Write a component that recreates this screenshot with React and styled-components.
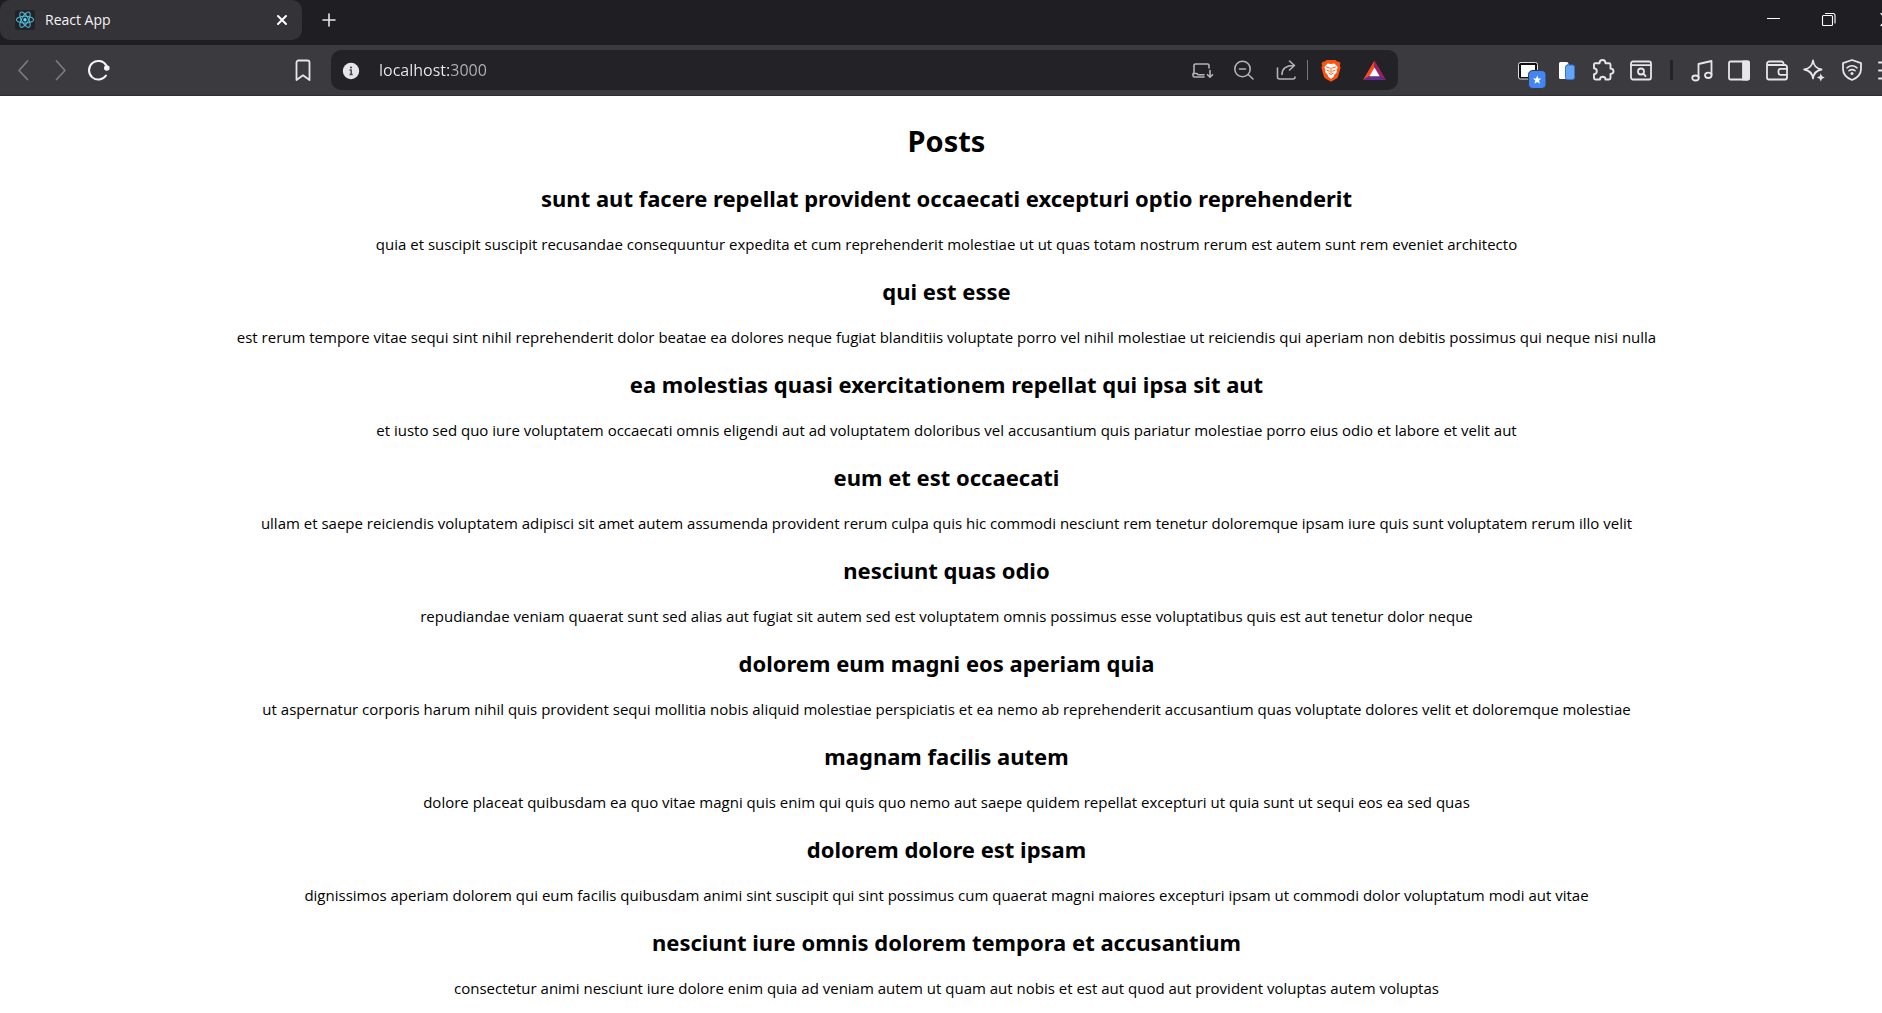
import React from "react";
import styled, { createGlobalStyle } from "styled-components";

const GlobalStyle = createGlobalStyle`
  *, *::before, *::after { box-sizing: border-box; }
  body {
    margin: 0;
    background: #ffffff;
    color: #000000;
    font-family: "Segoe UI", "Open Sans", "Noto Sans", sans-serif;
  }
  h1, h2 {
    font-family: "Segoe UI", "Noto Sans", "Open Sans", sans-serif;
  }
`;

const Chrome = styled.header`
  overflow: hidden;
  background: #1f1e23;
`;

const TabStrip = styled.div`
  display: flex;
  height: 45px;
`;

const Tab = styled.div`
  display: flex;
  align-items: center;
  width: 302px;
  height: 40px;
  padding: 0 10px 0 15px;
  border-radius: 10px;
  background: #343338;
`;

const TabTitle = styled.span`
  flex: 1;
  margin-left: 10px;
  color: #f4f4f6;
  font-size: 14px;
  line-height: 20px;
`;

const IconButton = styled.button`
  display: flex;
  align-items: center;
  justify-content: center;
  width: ${(p) => (p.$width ? `${p.$width}px` : "auto")};
  height: 40px;
  padding: 0;
  border: 0;
  background: none;
  color: ${(p) => p.$color || "#e6e5ea"};
`;

const WindowControls = styled.div`
  display: grid;
  grid-template-columns: repeat(3, 56px);
  margin: 0 -31px 0 auto;
`;

const Toolbar = styled.div`
  display: flex;
  height: 51px;
  padding-top: 5px;
  border-bottom: 1px solid #2e2d32;
  background: #3b3a3f;
`;

const Navigation = styled.nav`
  display: flex;
  justify-content: space-between;
  width: 331px;
  padding: 0 9px 0 4px;
`;

const ButtonRow = styled.div`
  display: grid;
  grid-template-columns: repeat(${(p) => p.$count}, 1fr);
  width: ${(p) => p.$width}px;
`;

const AddressBar = styled.form`
  display: flex;
  flex: 1;
  align-items: center;
  height: 40px;
  padding: 0 2px 0 12px;
  border-radius: 10px;
  background: #232227;
`;

const AddressInput = styled.input`
  flex: 1;
  min-width: 0;
  margin-left: 19px;
  padding: 0;
  border: 0;
  outline: 0;
  color: #ececf0;
  background: linear-gradient(90deg, #ececf0 70px, #b4b3ba 70px);
  background-clip: text;
  -webkit-background-clip: text;
  -webkit-text-fill-color: transparent;
  font-family: inherit;
  font-size: 16px;
  line-height: 24px;
`;

const AddressDivider = styled.span`
  width: 1px;
  height: 20px;
  margin-right: 1px;
  background: #77767c;
`;

const Extensions = styled.div`
  display: flex;
  align-items: center;
  height: 40px;
  margin: 0 -26px 0 111px;
`;

const ToolbarDivider = styled.span`
  width: 3px;
  height: 20px;
  margin: 0 10px;
  border-radius: 1px;
  background: #232227;
`;

const Posts = styled.main`
  padding-left: 11px;
  text-align: center;
`;

const PageTitle = styled.h1`
  margin: 0;
  padding: 23px 0 20px;
  font-size: 29px;
  font-weight: 700;
  line-height: 43px;
`;

const PostList = styled.div`
  display: grid;
  gap: 20px;
`;

const Post = styled.article`
  display: grid;
  gap: 20px;
`;

const PostTitle = styled.h2`
  margin: 0;
  font-size: 22px;
  font-weight: 700;
  line-height: 32px;
`;

const PostBody = styled.p`
  margin: 0;
  font-size: 15px;
  line-height: 21px;
`;

const Drawing = styled.svg`
  flex: none;
  overflow: visible;
`;

const Svg = ({ w, h, sw = 2, children }) => (
  <Drawing
    width={w}
    height={h}
    viewBox={`0 0 ${w} ${h}`}
    fill="none"
    stroke="currentColor"
    strokeWidth={sw}
    strokeLinecap="round"
    strokeLinejoin="round"
    aria-hidden="true"
  >
    {children}
  </Drawing>
);

const ReactFavicon = () => (
  <Svg w={20} h={20} sw={1}>
    <rect width="20" height="20" rx="2" fill="#222326" stroke="none" />
    <g stroke="#4fb6d3" strokeWidth="1.1">
      <ellipse cx="10" cy="9.7" rx="8.6" ry="3.4" />
      <ellipse cx="10" cy="9.7" rx="8.6" ry="3.4" transform="rotate(60 10 9.7)" />
      <ellipse cx="10" cy="9.7" rx="8.6" ry="3.4" transform="rotate(120 10 9.7)" />
    </g>
    <circle cx="10" cy="9.7" r="1.7" fill="#61dafb" stroke="none" />
  </Svg>
);
const CloseTab = () => (
  <Svg w={12} h={12}><path d="M2 2l8 8M10 2l-8 8" /></Svg>
);
const Plus = () => (
  <Svg w={14} h={14} sw={1.6}><path d="M7 1v12M1 7h12" /></Svg>
);
const Minimize = () => (
  <Svg w={13} h={14} sw={1}><path d="M0 5.5h13" strokeLinecap="butt" /></Svg>
);
const Restore = () => (
  <Svg w={14} h={14} sw={1.1}>
    <rect x="0.5" y="2.5" width="10" height="10" rx="1" />
    <path d="M3.5 .5h7.500a2 2 0 0 1 2 2v7.500" />
  </Svg>
);
const CloseWindow = () => (
  <Svg w={13} h={14} sw={1.2}><path d="M2 .5l11 12M13 .5l-11 12" /></Svg>
);
const Back = () => (
  <Svg w={12} h={20} sw={1.7}><path d="M10.500 1L2 10.500l8.500 9" /></Svg>
);
const Forward = () => (
  <Svg w={12} h={20} sw={1.7}><path d="M1.500 1L10 10.500l-8.500 9" /></Svg>
);
const Reload = () => (
  <Svg w={22} h={22}>
    <path d="M18.300 6.500A9.300 9.300 0 1 0 18 16.500" />
    <circle cx="18.800" cy="9" r="2.800" fill="currentColor" stroke="none" />
  </Svg>
);
const Bookmark = () => (
  <Svg w={16} h={22} sw={1.8}>
    <path d="M3.500 1.500h9a2 2 0 0 1 2 2v17.500L8 16.300 1.500 21v-17.500a2 2 0 0 1 2-2z" />
  </Svg>
);
const Info = () => (
  <Svg w={17} h={17}>
    <circle cx="8" cy="9" r="8.200" fill="currentColor" stroke="none" />
    <path d="M6.500 8h1.700v4.500M6.500 12.500h3.200" stroke="#4a494f" strokeWidth="1.500" strokeLinecap="butt" />
    <circle cx="8" cy="5.500" r="1.100" fill="#4a494f" stroke="none" />
  </Svg>
);
const Install = () => (
  <Svg w={22} h={18} sw={1.6}>
    <path d="M3 12.500V4.500A1.500 1.500 0 0 1 4.500 3H16.500A1.500 1.500 0 0 1 18 4.500V7" />
    <path d="M13 16H3.500A1.500 1.500 0 0 1 2 14.500V12.500h4l1 1.200h6" />
    <path d="M19 9.500v6.500M16.500 13.700l2.500 2.500 2.500-2.500" />
  </Svg>
);
const ZoomOut = () => (
  <Svg w={20} h={20} sw={1.6}>
    <circle cx="8.500" cy="9" r="7.700" />
    <path d="M14.200 14.500l4.800 4.500M5.500 9h6" />
  </Svg>
);
const Share = () => (
  <Svg w={20} h={20} sw={1.6}>
    <path d="M1.500 8v9a2 2 0 0 0 2 2h13.500a2 2 0 0 0 2-2" />
    <path d="M6 14.500c0-5 3-9 12-9M13.500 1l5 4.500-5 4.500" />
  </Svg>
);
const BraveLion = () => (
  <Svg w={20} h={23}>
    <path
      d="M5.500 1h9l2 1.700 1.500-.2 1.500 2-.7 1.700.8 2.300-2.400 8.800c-.3 1-.8 1.700-1.600 2.300L10 22.700 4.400 19.600c-.8-.6-1.300-1.300-1.600-2.300L.4 8.500l.8-2.300L.5 4.500l1.500-2 1.500.2z"
      fill="#fb5412"
      stroke="none"
    />
    <path
      d="M6.500 4.500l3.500.6 3.500-.6 3.300 3.700-1.300 2.700.5 2-2.500 2.600-1 2.400L10 19.700l-2.500-1.800-1-2.400L4 12.900l.5-2-1.300-2.700z"
      fill="#fff"
      stroke="none"
    />
    <path
      d="M5.500 8l2.900 1M14.500 8l-2.900 1M6 11.200l2.300 1M14 11.200l-2.300 1M10 9v4.500M8 14.300l2 1.200 2-1.200"
      stroke="#fb5412"
      strokeWidth="1"
    />
  </Svg>
);
const BatTriangle = () => (
  <Svg w={23} h={20}>
    <g stroke="none">
      <path d="M11.500 .5L0 20l6.500-4 5-8z" fill="#ff4724" />
      <path d="M11.500 .5L23 20l-6.500-4-5-8z" fill="#9e1f63" />
      <path d="M0 20h23l-6.500-4h-10z" fill="#662d91" />
      <path d="M11.500 7.500L6.300 16.200h10.400z" fill="#fff" />
    </g>
  </Svg>
);
const PictureInPicture = () => (
  <Svg w={22} h={20} sw={1}>
    <rect x="1.500" y="2.500" width="19" height="16.500" rx="2" fill="#111113" stroke="#dddce1" />
    <rect x="4" y="5" width="14" height="12" fill="#fff" stroke="none" />
    <rect x="11.500" y="10.500" width="17.500" height="18" rx="4" fill="#4285f4" stroke="#3b3a3f" />
    <path d="M20.200 15.500l1.200 3h3.100l-2.400 2 .8 3.200-2.700-1.800-2.700 1.800.8-3.200-2.400-2h3.100z" fill="#fff" stroke="none" />
  </Svg>
);
const CopyPages = () => (
  <Svg w={16} h={20}>
    <path d="M2.500 2h6a2 2 0 0 1 2 2v15h-8A1.500 1.500 0 0 1 1 17.500v-14A1.500 1.500 0 0 1 2.500 2z" fill="#fff" stroke="none" />
    <rect x="7.500" y="5" width="9" height="14.500" rx="2" fill="#65a5f7" stroke="#3576cf" strokeWidth="1" />
  </Svg>
);
const Puzzle = () => (
  <Svg w={22} h={22} sw={1.9}>
    <path d="M3 4.300h4.500C7.600 2 8.700 1 10.500 1s2.900 1 3 3.300H17a1.500 1.500 0 0 1 1.500 1.500v3.700c1.800.2 3 1.200 3 2.700s-1.200 2.500-3 2.700V19a1.500 1.500 0 0 1-1.500 1.500h-3.500c0-1.800-1.200-2.800-2.700-2.800S8 18.700 8 20.500H3.500A1.500 1.500 0 0 1 2 19v-3.800c1.900-.1 2.800-1.300 2.800-2.900S3.900 9.500 2 9.300v-4a1 1 0 0 1 1-1z" />
  </Svg>
);
const SearchTabs = () => (
  <Svg w={22} h={20} sw={1.800}>
    <rect x="1" y="1.500" width="20" height="18" rx="2" />
    <path d="M1 5.100h20" />
    <circle cx="11" cy="11.500" r="3" />
    <path d="M13.300 13.800l2.200 2.200" />
  </Svg>
);
const Music = () => (
  <Svg w={22} h={22} sw={1.800}>
    <path d="M7.500 18.500V5L20.500 2V15.500" />
    <ellipse cx="4.500" cy="19" rx="3.300" ry="2.500" />
    <ellipse cx="17.300" cy="16.300" rx="3.300" ry="2.700" />
  </Svg>
);
const SidePanel = () => (
  <Svg w={22} h={20} sw={1.800}>
    <rect x="1" y="1.500" width="20" height="18" rx="1.500" />
    <path d="M15 1.500h5a1 1 0 0 1 1 1v16a1 1 0 0 1-1 1h-5z" fill="currentColor" />
  </Svg>
);
const Wallet = () => (
  <Svg w={22} h={20} sw={1.800}>
    <path d="M17.500 5V3.500a2 2 0 0 0-2-2H3.500A2.500 2.500 0 0 0 1 4v13.500a2 2 0 0 0 2 2h16a2 2 0 0 0 2-2V7a2 2 0 0 0-2-2H2" />
    <path d="M21 8.800h-6.500a2 2 0 0 0-2 2v2a2 2 0 0 0 2 2H21" />
  </Svg>
);
const Sparkle = () => (
  <Svg w={22} h={22} sw={1.800}>
    <path d="M10 1.500c.7 5.500 3 8 8.500 9-5.500 1-7.800 3.500-8.500 9-.7-5.500-3-8-8.800-9 5.800-1 8.100-3.500 8.800-9z" />
    <path d="M17.800 15v6.500M14.500 18.500h6.500" stroke="#3b3a3f" strokeWidth="3" />
    <path d="M17.800 14.500l1.200 2.800 2.800 1.200-2.800 1.200-1.200 2.800-1.200-2.800-2.800-1.200 2.800-1.200z" fill="currentColor" stroke="none" />
  </Svg>
);
const ShieldWifi = () => (
  <Svg w={20} h={22} sw={1.800}>
    <path d="M10 1l9 3.200v5.800c0 5-3.500 8.800-9 11-5.500-2.200-9-6-9-11V4.200z" />
    <path d="M5 8.800c3-2.400 7-2.400 10 0M7 11.700c2-1.400 4-1.400 6 0" strokeWidth="1.600" />
    <circle cx="10" cy="14.500" r="1.500" fill="currentColor" stroke="none" />
  </Svg>
);
const Menu = () => (
  <Svg w={22} h={20}><path d="M1 2.500h20M1 10.500h20M1 18.500h20" /></Svg>
);

const posts = [
  ["sunt aut facere repellat provident occaecati excepturi optio reprehenderit", "quia et suscipit suscipit recusandae consequuntur expedita et cum reprehenderit molestiae ut ut quas totam nostrum rerum est autem sunt rem eveniet architecto"],
  ["qui est esse", "est rerum tempore vitae sequi sint nihil reprehenderit dolor beatae ea dolores neque fugiat blanditiis voluptate porro vel nihil molestiae ut reiciendis qui aperiam non debitis possimus qui neque nisi nulla"],
  ["ea molestias quasi exercitationem repellat qui ipsa sit aut", "et iusto sed quo iure voluptatem occaecati omnis eligendi aut ad voluptatem doloribus vel accusantium quis pariatur molestiae porro eius odio et labore et velit aut"],
  ["eum et est occaecati", "ullam et saepe reiciendis voluptatem adipisci sit amet autem assumenda provident rerum culpa quis hic commodi nesciunt rem tenetur doloremque ipsam iure quis sunt voluptatem rerum illo velit"],
  ["nesciunt quas odio", "repudiandae veniam quaerat sunt sed alias aut fugiat sit autem sed est voluptatem omnis possimus esse voluptatibus quis est aut tenetur dolor neque"],
  ["dolorem eum magni eos aperiam quia", "ut aspernatur corporis harum nihil quis provident sequi mollitia nobis aliquid molestiae perspiciatis et ea nemo ab reprehenderit accusantium quas voluptate dolores velit et doloremque molestiae"],
  ["magnam facilis autem", "dolore placeat quibusdam ea quo vitae magni quis enim qui quis quo nemo aut saepe quidem repellat excepturi ut quia sunt ut sequi eos ea sed quas"],
  ["dolorem dolore est ipsam", "dignissimos aperiam dolorem qui eum facilis quibusdam animi sint suscipit qui sint possimus cum quaerat magni maiores excepturi ipsam ut commodi dolor voluptatum modi aut vitae"],
  ["nesciunt iure omnis dolorem tempora et accusantium", "consectetur animi nesciunt iure dolore enim quia ad veniam autem ut quam aut nobis et est aut quod aut provident voluptas autem voluptas"],
];

const pageActions = [
  ["Install app", Install],
  ["Zoom", ZoomOut],
  ["Share", Share],
];
const shieldActions = [
  ["Brave Shields", BraveLion],
  ["Brave Rewards", BatTriangle],
];
const extensions = [
  ["Picture in picture", PictureInPicture],
  ["Copy pages", CopyPages],
  ["Extensions", Puzzle],
  ["Search tabs", SearchTabs],
];
const browserTools = [
  ["Playlist", Music],
  ["Side panel", SidePanel],
  ["Wallet", Wallet],
  ["Leo AI", Sparkle],
  ["VPN", ShieldWifi],
  ["Menu", Menu],
];

const Buttons = ({ items, width, color }) => (
  <ButtonRow $count={items.length} $width={width}>
    {items.map(([label, Icon]) => (
      <IconButton key={label} type="button" aria-label={label} $color={color}>
        <Icon />
      </IconButton>
    ))}
  </ButtonRow>
);

export default function App() {
  return (
    <>
      <GlobalStyle />
      <Chrome>
        <TabStrip>
          <Tab>
            <ReactFavicon />
            <TabTitle>React App</TabTitle>
            <IconButton type="button" aria-label="Close tab" $width={20} $color="#ffffff"><CloseTab /></IconButton>
          </Tab>
          <IconButton type="button" aria-label="New tab" $width={54}><Plus /></IconButton>
          <WindowControls>
            <IconButton type="button" aria-label="Minimize" $color="#ffffff"><Minimize /></IconButton>
            <IconButton type="button" aria-label="Restore" $color="#ffffff"><Restore /></IconButton>
            <IconButton type="button" aria-label="Close window" $color="#ffffff"><CloseWindow /></IconButton>
          </WindowControls>
        </TabStrip>
        <Toolbar>
          <Navigation>
            <ButtonRow $count={3} $width={114}>
              <IconButton type="button" aria-label="Back" $color="#7c7b81"><Back /></IconButton>
              <IconButton type="button" aria-label="Forward" $color="#7c7b81"><Forward /></IconButton>
              <IconButton type="button" aria-label="Reload" $color="#f4f4f6"><Reload /></IconButton>
            </ButtonRow>
            <IconButton type="button" aria-label="Bookmark this page" $width={38}><Bookmark /></IconButton>
          </Navigation>
          <AddressBar onSubmit={(e) => e.preventDefault()}>
            <IconButton type="button" aria-label="Site information" $width={17}><Info /></IconButton>
            <AddressInput type="text" aria-label="Address" defaultValue="localhost:3000" spellCheck={false} />
            <Buttons items={pageActions} width={126} color="#b4b3ba" />
            <AddressDivider />
            <Buttons items={shieldActions} width={87} />
          </AddressBar>
          <Extensions>
            <Buttons items={extensions} width={151} />
            <ToolbarDivider />
            <Buttons items={browserTools} width={225} />
          </Extensions>
        </Toolbar>
      </Chrome>
      <Posts>
        <PageTitle>Posts</PageTitle>
        <PostList>
          {posts.map(([title, body]) => (
            <Post key={title}>
              <PostTitle>{title}</PostTitle>
              <PostBody>{body}</PostBody>
            </Post>
          ))}
        </PostList>
      </Posts>
    </>
  );
}
